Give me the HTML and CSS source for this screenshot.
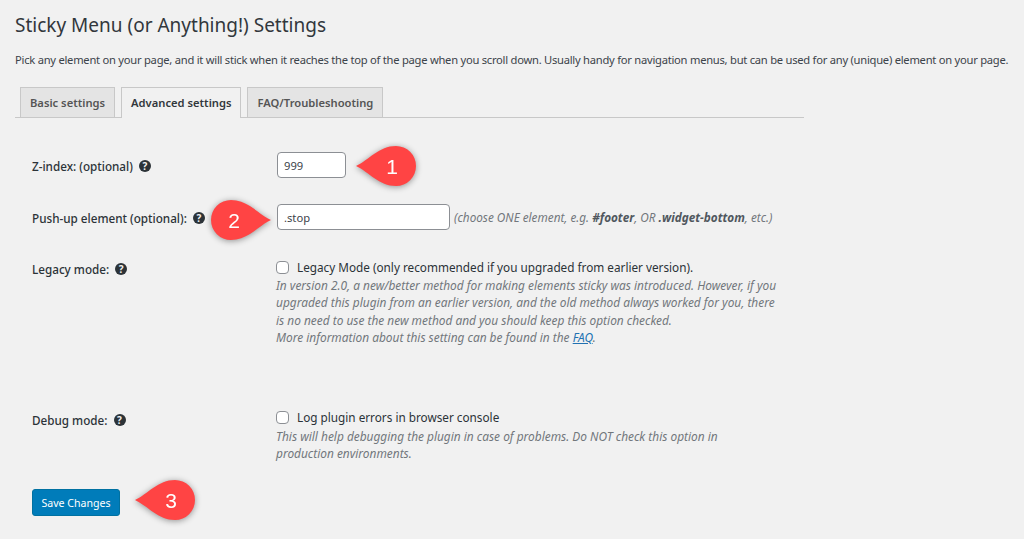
FILE: index.html
```html
<!DOCTYPE html>
<html lang="en">
<head>
<meta charset="UTF-8">
<title>Sticky Menu (or Anything!) Settings</title>
<link rel="stylesheet" href="styles.css">
</head>
<body>
<div class="wrap">
<h1>Sticky Menu (or Anything!) Settings</h1>
<p class="intro">Pick any element on your page, and it will stick when it reaches the top of the page when you scroll down. Usually handy for navigation menus, but can be used for any (unique) element on your page.</p>

<nav class="tabs">
<a class="tab">Basic settings</a>
<a class="tab tab_active">Advanced settings</a>
<a class="tab">FAQ/Troubleshooting</a>
</nav>

<form class="opciones">
<div class="fila fila_zindex">
<div class="etiqueta">Z-index: (optional) <span class="ayuda">?</span></div>
<div class="campo"><input type="text" class="txt_corto" value="999"></div>
</div>

<div class="fila fila_pushup">
<div class="etiqueta">Push-up element (optional): <span class="ayuda">?</span></div>
<div class="campo"><input type="text" class="txt_largo" value=".stop"> <span class="nota nota_linea">(choose ONE element, e.g. <b>#footer</b>, OR <b>.widget-bottom</b>, etc.)</span></div>
</div>

<div class="fila fila_legacy">
<div class="etiqueta">Legacy mode: <span class="ayuda">?</span></div>
<div class="campo">
<label class="check"><span class="casilla"></span>Legacy Mode (only recommended if you upgraded from earlier version).</label>
<p class="nota">In version 2.0, a new/better method for making elements sticky was introduced. However, if you<br>upgraded this plugin from an earlier version, and the old method always worked for you, there<br>is no need to use the new method and you should keep this option checked.<br>More information about this setting can be found in the <a href="#">FAQ</a>.</p>
</div>
</div>

<div class="fila fila_debug">
<div class="etiqueta">Debug mode: <span class="ayuda">?</span></div>
<div class="campo">
<label class="check"><span class="casilla"></span>Log plugin errors in browser console</label>
<p class="nota">This will help debugging the plugin in case of problems. Do NOT check this option in<br>production environments.</p>
</div>
</div>

<button type="button" class="guardar">Save Changes</button>
</form>
</div>

<svg class="globo globo1" viewBox="-2 -2 64 44"><path d="M0 20C13 14 23 0 40 0A20 20 0 0 1 40 40C23 40 13 26 0 20Z"/><text x="36" y="28">1</text></svg>
<svg class="globo globo2" viewBox="-2 -2 64 44"><path d="M60 20C47 14 37 0 20 0A20 20 0 0 0 20 40C37 40 47 26 60 20Z"/><text x="23" y="28">2</text></svg>
<svg class="globo globo3" viewBox="-2 -2 64 44"><path d="M0 20C13 14 23 0 40 0A20 20 0 0 1 40 40C23 40 13 26 0 20Z"/><text x="36" y="28">3</text></svg>
</body>
</html>
```
FILE: styles.css
```css
body{
	background-color: #f1f1f1;
	color: #3c434a;
	font-family: "Noto Sans", "Open Sans", sans-serif;
	font-size: 11.9px;
	margin: 0;
	height: 539px;
	overflow: hidden;
}

.wrap{
	padding: 0 0 0 15px;
}

h1{
	color: #32373c;
	font-size: 19px;
	font-weight: 400;
	line-height: 26px;
	margin: 0;
	padding-top: 12px;
}

.intro{
	font-size: 11.2px;
	letter-spacing: -.255px;
	line-height: 16px;
	margin: 14px 0 0;
	white-space: nowrap;
}

.tabs{
	border-bottom: 1px solid #c8c8c8;
	display: flex;
	gap: 6px;
	margin-top: 19px;
	padding-left: 5px;
	width: 784px;
	height: 30px;
}

.tab{
	background-color: #e4e4e4;
	border: 1px solid #c8c8c8;
	border-bottom: none;
	color: #555;
	font-weight: 600;
	font-size: 11.2px;
	line-height: 30px;
	padding: 0 9px;
	height: 30px;
	box-sizing: border-box;
}

.tab_active{
	background-color: #f1f1f1;
	color: #32373c;
	height: 31px;
	margin-bottom: -1px;
}

.opciones{
	padding-left: 17px;
}

.fila{
	display: flex;
}

.fila_zindex{ margin-top: 34px; }
.fila_pushup{ margin-top: 25px; }
.fila_legacy{ margin-top: 27px; }
.fila_debug{ margin-top: 62px; }

.etiqueta{
	color: #2c3338;
	font-weight: 500;
	font-size: 11.7px;
	width: 244px;
	flex: none;
	line-height: 26px;
	padding-top: 1px;
}
.fila_legacy .etiqueta{
	line-height: 20px;
}
.fila_debug .etiqueta{
	line-height: 20px;
	padding-top: 2px;
}

.ayuda{
	background-color: #2c3338;
	border-radius: 50%;
	color: #f1f1f1;
	display: inline-block;
	font-size: 10px;
	font-weight: 700;
	height: 12px;
	line-height: 12px;
	margin-left: 3px;
	text-align: center;
	vertical-align: 1px;
	width: 12px;
}

input[type=text]{
	background-color: #fff;
	border: 1px solid #8c8f94;
	border-radius: 4px;
	box-sizing: border-box;
	color: #3c434a;
	font-family: inherit;
	font-size: 11.2px;
	height: 26px;
	padding: 0 6px;
	margin: 0 0 0 1px;
	vertical-align: top;
}
.txt_corto{ width: 69px; }
.txt_largo{ width: 173px; }

.nota{
	color: #72777c;
	font-style: italic;
	font-size: 11.9px;
	line-height: 17.3px;
	margin: 1px 0 0;
}
.fila_debug .nota{
	margin-top: 2px;
}
.nota b{
	color: #50575e;
}
.nota a{
	color: #2271b1;
}
.nota_linea{
	font-size: 11.75px;
	line-height: 26px;
	margin-left: 1px;
}

.check{
	align-items: center;
	color: #2c3338;
	display: flex;
	font-size: 11.75px;
	line-height: 18px;
}

.casilla{
	background-color: #fff;
	border: 1px solid #8c8f94;
	border-radius: 4px;
	box-sizing: border-box;
	height: 13px;
	margin-right: 8px;
	width: 13px;
}

.guardar{
	background-color: #007cba;
	border: 1px solid #0071a1;
	border-radius: 3px;
	color: #fff;
	display: block;
	font-family: inherit;
	font-size: 10.6px;
	height: 27px;
	margin-top: 26px;
	padding: 1px 0 0;
	width: 88px;
}

/* globos rojos numerados sobre la captura */
.globo{
	filter: drop-shadow(0 1px 3px rgba(0,0,0,.4));
	height: 44px;
	position: absolute;
	width: 64px;
}
.globo path{
	fill: #ff4444;
}
.globo text{
	fill: #fff;
	font-family: "Liberation Sans", sans-serif;
	font-size: 21px;
	text-anchor: middle;
}
.globo1{ left: 354px; top: 144px; }
.globo2{ left: 209px; top: 198px; }
.globo3{ left: 133px; top: 478px; }
```
